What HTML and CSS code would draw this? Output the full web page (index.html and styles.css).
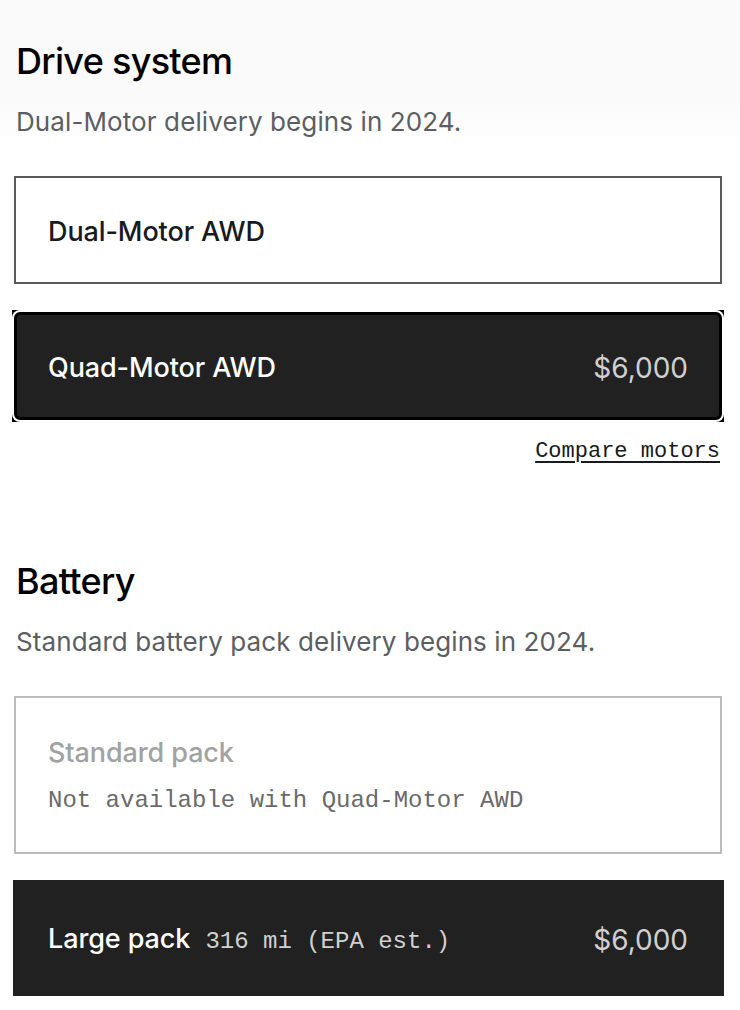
FILE: index.html
```html
<!DOCTYPE html>
<html lang="en">
<head>
    <meta charset="UTF-8">
    <title>Drive system</title>
    <link rel="stylesheet" href="styles.css">
</head>
<body>
<div class="top">
    <div class="wrap">
        <h2 class="title first">Drive system</h2>
        <p class="note">Dual-Motor delivery begins in 2024.</p>
    </div>
</div>
<div class="wrap">
    <div class="option">
        <span class="name">Dual-Motor AWD</span>
    </div>
    <div class="picked">
        <div class="option dark">
            <span class="name">Quad-Motor AWD</span>
            <span class="price">$6,000</span>
        </div>
    </div>
    <div class="links">
        <a href="#" class="compare">Compare motors</a>
    </div>

    <h2 class="title">Battery</h2>
    <p class="note">Standard battery pack delivery begins in 2024.</p>
    <div class="option off">
        <span class="name">Standard pack</span>
        <span class="mono">Not available with Quad-Motor AWD</span>
    </div>
    <div class="option dark large">
        <span class="name">Large pack <span class="mono">316 mi (EPA est.)</span></span>
        <span class="price">$6,000</span>
    </div>
</div>
</body>
</html>
```

FILE: styles.css
```css
* {
    margin: 0;
    padding: 0;
    box-sizing: border-box;
}

body {
    font-family: Inter, "Noto Sans", sans-serif;
    color: #171a20;
    background-color: #fff;
}

.top {
    background: linear-gradient(#fafafa 0, #fafafa 100px, #fff 145px);
}

.wrap {
    padding: 0 18px 0 14px;
}

.title {
    font-size: 36px;
    line-height: 40px;
    font-weight: 500;
    color: #000;
    padding-left: 2px;
    margin-top: 95px;
    letter-spacing: -0.7px;
}

.title.first {
    margin-top: 0;
    padding-top: 41px;
}

.note {
    font-size: 26px;
    line-height: 32px;
    color: #5c5e62;
    margin-top: 25px;
    padding-left: 2px;
    letter-spacing: 0.1px;
}

.option {
    margin-top: 38px;
    height: 108px;
    border: 2px solid #595959;
    padding: 4px 32px 0;
    display: flex;
    align-items: center;
    justify-content: space-between;
    font-size: 27px;
    line-height: 32px;
}

.name {
    font-weight: 500;
    letter-spacing: -0.1px;
}

.price {
    font-size: 28px;
    color: #d0d0d0;
}

.mono {
    font-family: "Liberation Mono", monospace;
    font-size: 24px;
    font-weight: 400;
    letter-spacing: 0;
}

.picked {
    margin: 26px -2px 0;
    padding: 2px;
    background-color: #000;
}

.picked .option {
    margin-top: 0;
    border: 3px solid #000;
    border-radius: 6px;
    padding: 4px 31px 0;
    box-shadow: 0 0 0 2px #fff;
}

.dark {
    background-color: #212121;
    color: #fff;
}

.links {
    margin-top: 16px;
    display: flex;
    justify-content: flex-end;
    padding-right: 2px;
}

.compare {
    font-family: "Liberation Mono", monospace;
    font-size: 22px;
    line-height: 28px;
    color: #171a20;
    text-decoration: underline;
    text-decoration-thickness: 2px;
    text-underline-offset: 4px;
}

.off {
    height: 158px;
    border-color: #bcbcbc;
    flex-direction: column;
    align-items: flex-start;
    justify-content: center;
    gap: 16px;
}

.off .name {
    color: #a2a2a2;
}

.off .mono {
    color: #6a6a6a;
}

.large {
    margin: 26px -2px 0 -1px;
    height: 116px;
    border: none;
    padding: 4px 36px 0 35px;
}

.large .mono {
    color: #d0d0d0;
    margin-left: 8px;
}
```
